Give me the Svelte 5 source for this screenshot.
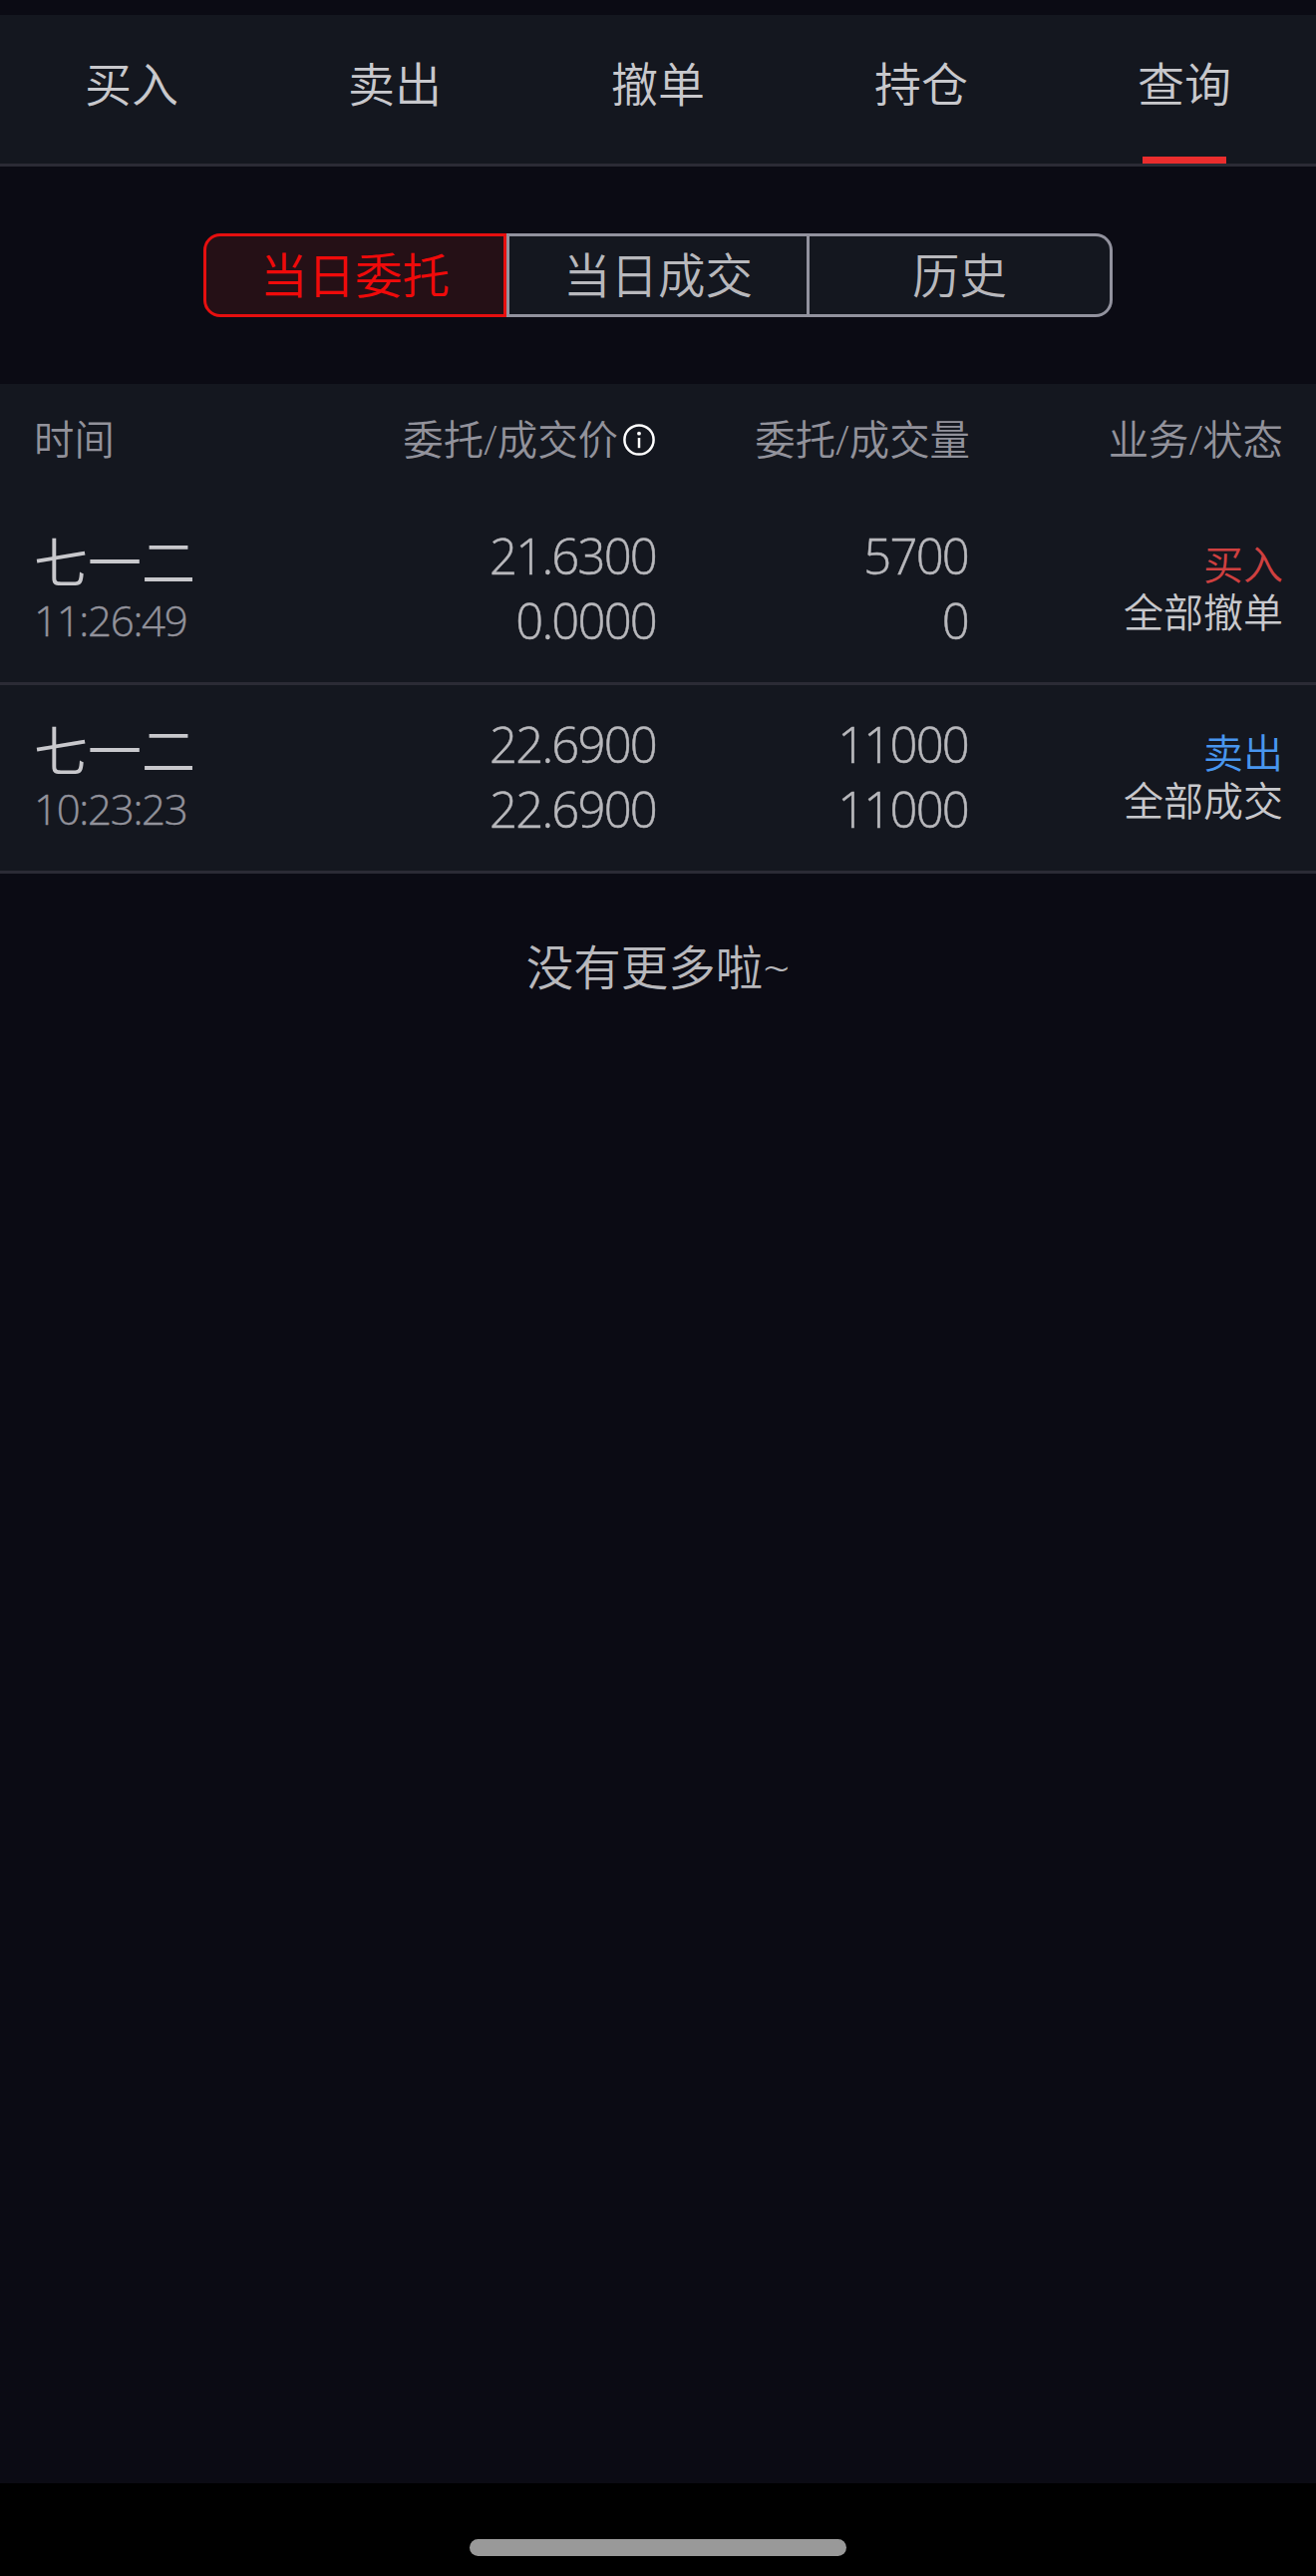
<script lang="ts">
  type Order = {
    name: string;
    time: string;
    price: string;
    dealPrice: string;
    amount: string;
    dealAmount: string;
    side: 'buy' | 'sell';
    status: string;
  };

  const tabs = ['买入', '卖出', '撤单', '持仓', '查询'];
  const segments = ['当日委托', '当日成交', '历史'];
  const sideText = { buy: '买入', sell: '卖出' };

  const orders: Order[] = [
    {
      name: '七一二',
      time: '11:26:49',
      price: '21.6300',
      dealPrice: '0.0000',
      amount: '5700',
      dealAmount: '0',
      side: 'buy',
      status: '全部撤单'
    },
    {
      name: '七一二',
      time: '10:23:23',
      price: '22.6900',
      dealPrice: '22.6900',
      amount: '11000',
      dealAmount: '11000',
      side: 'sell',
      status: '全部成交'
    }
  ];

  let activeTab = $state(4);
  let activeSegment = $state(0);
</script>

<div class="page">
  <nav class="tabs">
    {#each tabs as tab, i}
      <button class="tab" class:active={i === activeTab} onclick={() => (activeTab = i)}>
        <span>{tab}</span>
      </button>
    {/each}
  </nav>

  <div class="segments">
    {#each segments as segment, i}
      <button class="segment" class:active={i === activeSegment} onclick={() => (activeSegment = i)}>
        {segment}
      </button>
    {/each}
  </div>

  <section class="table">
    <div class="row head">
      <div>时间</div>
      <div class="right price-head">
        <span>委托/成交价</span>
        <svg class="info" viewBox="0 0 32 32" fill="none">
          <circle cx="16" cy="16" r="14.6" stroke="#fff" stroke-width="2.5" />
          <circle cx="16" cy="9.7" r="1.9" fill="#fff" />
          <path d="M16 14v10.2" stroke="#fff" stroke-width="2.5" />
        </svg>
      </div>
      <div class="right">委托/成交量</div>
      <div class="right">业务/状态</div>
    </div>

    {#each orders as order}
      <div class="row item">
        <div class="stock">
          <div class="name">{order.name}</div>
          <div class="time">{order.time}</div>
        </div>
        <div class="right num">
          <div>{order.price}</div>
          <div>{order.dealPrice}</div>
        </div>
        <div class="right num">
          <div>{order.amount}</div>
          <div>{order.dealAmount}</div>
        </div>
        <div class="right state">
          <div class={order.side}>{sideText[order.side]}</div>
          <div>{order.status}</div>
        </div>
      </div>
    {/each}
  </section>

  <p class="no-more">没有更多啦~</p>

  <footer class="gesture-bar">
    <div class="handle"></div>
  </footer>
</div>

<style>
  :global(body) {
    background: #0b0b14;
  }
  .page {
    display: flex;
    flex-direction: column;
    box-sizing: border-box;
    width: 1320px;
    height: 2583px;
    padding-top: 15px;
    background: #0b0b14;
    color: #b8b8bc;
    font-family: "Open Sans", "Noto Sans CJK SC", sans-serif;
    font-weight: 350;
  }
  button {
    margin: 0;
    padding: 0;
    border: 0;
    background: none;
    color: inherit;
    font: inherit;
  }

  .tabs {
    display: flex;
    height: 149px;
    background: #14171f;
    border-bottom: 3px solid #2b2b35;
  }
  .tab {
    flex: 1;
    display: flex;
    flex-direction: column;
    align-items: center;
    justify-content: space-between;
    color: #c8c8cc;
    font-size: 47px;
    line-height: 70px;
  }
  .tab span {
    margin-top: 34px;
  }
  .tab::after {
    content: "";
    width: 84px;
    height: 7px;
  }
  .tab.active::after {
    background: #eb2d2d;
  }

  .segments {
    display: flex;
    width: 912px;
    height: 84px;
    margin: 67px auto;
  }
  .segment {
    width: 304px;
    box-sizing: border-box;
    background: #14171f;
    border: 3px solid #92929e;
    font-size: 47.5px;
    line-height: 78px;
  }
  .segment:first-child {
    border-radius: 17px 0 0 17px;
  }
  .segment:last-child {
    border-left: 0;
    border-radius: 0 17px 17px 0;
  }
  .segment.active {
    background: #251016;
    border-color: #e60f0f;
    color: #f00a0a;
  }

  .table {
    background: #14171f;
  }
  .row {
    display: grid;
    grid-template-columns: 280px 346px 313px 1fr;
    align-items: center;
    padding: 0 33px 0 34px;
  }
  .right {
    text-align: right;
  }
  .head {
    height: 111px;
    padding-bottom: 2px;
    color: #92929b;
    font-size: 40.4px;
    line-height: 56px;
  }
  .price-head {
    display: flex;
    align-items: center;
    justify-content: flex-end;
    gap: 5px;
  }
  .info {
    width: 32px;
    height: 32px;
    margin-right: 3px;
  }
  .item {
    height: 186px;
    border-bottom: 3px solid #2b2b35;
  }
  .stock {
    padding-top: 2px;
  }
  .name {
    color: #c8c8cc;
    font-family: Lato, "Noto Sans CJK SC", sans-serif;
    font-size: 54px;
    line-height: 60px;
  }
  .time {
    color: #92929b;
    font-size: 42px;
    font-weight: 300;
    line-height: 54px;
    letter-spacing: -1.3px;
    -webkit-text-stroke: 0.4px currentColor;
  }
  .num {
    padding: 0 2px 2px 0;
    font-size: 49px;
    font-weight: 300;
    line-height: 65px;
    letter-spacing: -1.8px;
    -webkit-text-stroke: 0.5px currentColor;
  }
  .state {
    padding-bottom: 2px;
    color: #c8c8cc;
    font-family: Lato, "Noto Sans CJK SC", sans-serif;
    font-size: 40px;
    line-height: 48px;
  }
  .buy {
    color: #cf4040;
  }
  .sell {
    color: #4896ee;
  }

  .no-more {
    flex: 1;
    margin: 59px 0 0;
    text-align: center;
    font-size: 47.5px;
    line-height: 70px;
  }

  .gesture-bar {
    display: flex;
    justify-content: center;
    height: 93px;
    background: #000;
  }
  .handle {
    width: 378px;
    height: 17px;
    margin-top: 56px;
    border-radius: 9px;
    background: #999;
  }
</style>
